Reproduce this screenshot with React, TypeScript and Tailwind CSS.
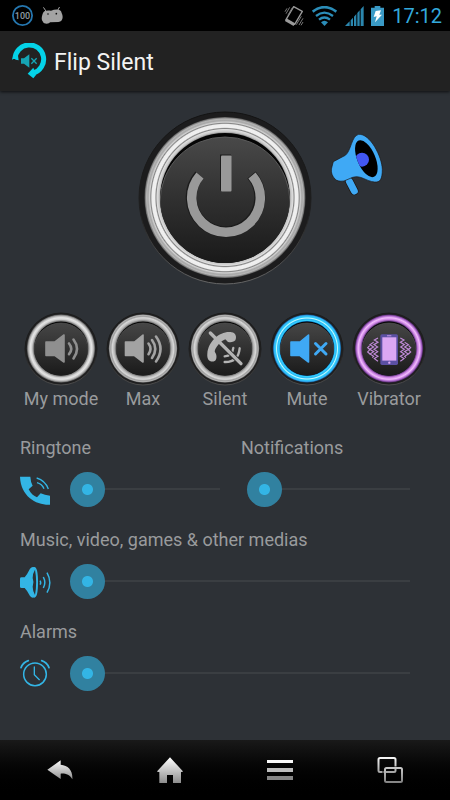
import React, { useState } from "react";

function StatusBar() {
  return (
    <div className="flex h-[31px] items-center bg-black pl-3 pr-2">
      <svg width="21" height="21" viewBox="0 0 21 21" role="img" aria-label="Battery 100">
        <circle cx="10.5" cy="10.5" r="9.6" fill="none" stroke="#2577b0" strokeWidth="1.800" />
        <text x="10.5" y="13.6" textAnchor="middle" fill="#8f9ba3" className="font-[Roboto,sans-serif] text-[9px] font-medium">100</text>
      </svg>
      <svg className="ml-2" width="23" height="17" viewBox="0 0 69 51" aria-hidden="true">
        <path d="M8 2l6 9M55 1l-5 9" stroke="#a3a3a3" strokeWidth="3" strokeLinecap="round" />
        <path d="M5 20C9 10 17 10 30 11C45 6 60 6 62 18C68 30 65 44 52 45L27 46C25 51 8 52 6 44C1 40 1 31 5 20Z" fill="#a3a3a3" />
        <circle cx="21" cy="21" r="2.5" fill="#111" />
        <circle cx="46" cy="20" r="2.5" fill="#111" />
      </svg>
      <div className="ml-auto flex items-center">
        <svg width="20" height="21" viewBox="0 0 60 63" fill="none" aria-hidden="true">
          <path d="M29 5L55 19L32 58L6 44Z" stroke="#9a9a9a" strokeWidth="4" strokeLinejoin="round" />
          <path d="M5 44L31 59" stroke="#9a9a9a" strokeWidth="9" />
          <path d="M3 20L9 10M6 26L17 7M12 30L25 8M37 59L52 34M45 60L57 40M51 61L57 51" stroke="#777" strokeWidth="3" />
        </svg>
        <svg className="ml-2" width="25" height="20" viewBox="0 0 75 60" fill="none" stroke="#2b8db8" aria-hidden="true">
          <path d="M2 17Q37 -10 73 17" strokeWidth="8" />
          <path d="M12 30Q37 10 63 30" strokeWidth="7" />
          <path d="M21 41Q37 28 54 41" strokeWidth="7" />
          <path d="M27 49Q37 39 48 49L37.500 60Z" fill="#2b8db8" stroke="none" />
        </svg>
        <svg className="ml-2" width="19" height="20" viewBox="0 0 57 60" fill="#2b86ad" aria-hidden="true">
          <path d="M0 60L14 46V60ZM17 43L24 35V60H17ZM27 32L34 24V60H27ZM37 21L44 13V60H37ZM47 10L56 0V60H47Z" />
        </svg>
        <svg className="ml-[7px]" width="13" height="20" viewBox="0 0 39 60" aria-hidden="true">
          <path d="M11 0H28V5H39V60H0V5H11Z" fill="#3a9ac6" />
          <path d="M14 15L30 13L25 26H33L12 49L17 31L8 33Z" fill="#fff" />
        </svg>
        <span className="ml-2 text-[20px] leading-6 text-[#33a9dc]">17:12</span>
      </div>
    </div>
  );
}

function Header() {
  return (
    <header className="flex h-[60px] items-center bg-[#222222] pl-3 shadow-[0_1px_3px_rgba(0,0,0,0.7)]">
      <svg width="35" height="36" viewBox="0 0 105 108" aria-hidden="true">
        <path d="M9 48A43 43 0 1 1 64 90" fill="none" stroke="#04d3e8" strokeWidth="15" />
        <path d="M0 51L7 46L11 50L20 52L18 38L4 38Z" fill="#04d3e8" />
        <path d="M47 92L64 74L72 96L64 106Z" fill="#04d3e8" />
        <path d="M27 46H36L52 34V74L36 62H27Z" fill="#16a5b4" />
        <path d="M58 46L74 62M74 46L58 62" stroke="#16a5b4" strokeWidth="4" />
      </svg>
      <h1 className="ml-[7px] pt-1 text-[23px] leading-7 text-[#f3f3f3]">Flip Silent</h1>
    </header>
  );
}

function PowerButton() {
  return (
    <button type="button" aria-label="Power" className="block">
      <svg width="174" height="174" viewBox="0 0 174 174" className="block">
        <defs>
          <radialGradient id="bigRing" gradientUnits="userSpaceOnUse" cx="87" cy="86.500" r="80.500">
            <stop offset="0.800" stopColor="#8d8d8d" />
            <stop offset="0.820" stopColor="#c9c9c9" />
            <stop offset="0.845" stopColor="#dedede" />
            <stop offset="0.857" stopColor="#858585" />
            <stop offset="0.872" stopColor="#f0f0f0" />
            <stop offset="0.908" stopColor="#eeeeee" />
            <stop offset="0.922" stopColor="#868686" />
            <stop offset="0.935" stopColor="#d2d2d2" />
            <stop offset="0.955" stopColor="#a8a8a8" />
            <stop offset="0.975" stopColor="#b4b4b4" />
            <stop offset="1" stopColor="#555555" />
          </radialGradient>
          <linearGradient id="bigFace" x1="0" y1="0" x2="0" y2="1">
            <stop offset="0" stopColor="#494949" />
            <stop offset="0.500" stopColor="#2f2f2f" />
            <stop offset="1" stopColor="#181818" />
          </linearGradient>
          <linearGradient id="bigEdge" x1="0" y1="0" x2="0" y2="1">
            <stop offset="0" stopColor="#121212" />
            <stop offset="0.600" stopColor="#202020" />
            <stop offset="1" stopColor="#666666" />
          </linearGradient>
          <clipPath id="bigHole"><circle cx="87" cy="87" r="65" /></clipPath>
        </defs>
        <circle cx="87" cy="87" r="86" fill="#1c1c1d" stroke="url(#bigEdge)" strokeWidth="1" />
        <circle cx="87" cy="86.500" r="80.500" fill="url(#bigRing)" />
        <circle cx="87" cy="87" r="65" fill="#050505" />
        <g clipPath="url(#bigHole)">
          <circle cx="87" cy="91" r="65" fill="url(#bigFace)" stroke="#5a5a5a" strokeWidth="1" />
        </g>
        <path d="M61.500 64A34.300 34.300 0 1 0 113.500 64" fill="none" stroke="#1c1c1c" strokeWidth="11" />
        <path d="M62 64.500A34.300 34.300 0 1 0 114 64.500" fill="none" stroke="#999999" strokeWidth="9.500" />
        <rect x="82" y="43.500" width="11" height="36" fill="#1c1c1c" />
        <rect x="83" y="44.500" width="10.500" height="36" rx="1" fill="#999999" />
      </svg>
    </button>
  );
}

function Megaphone() {
  return (
    <svg width="52" height="62" viewBox="33 42 156 186" className="block">
      <path d="M88 184L103 213" stroke="#1c1410" strokeWidth="25" strokeLinecap="round" />
      <path d="M88 184L103 213" stroke="#3fa9f5" strokeWidth="21" strokeLinecap="round" />
      <path d="M40 125L76 106C94 92 94 48 116 43C150 40 186 110 187 148C187 178 180 188 164 186C138 184 122 164 98 172L72 183C58 185 50 182 46 178C34 166 32 152 36 140C38 134 38 130 40 125Z" fill="#3fa9f5" stroke="#1c1410" strokeWidth="2" />
      <clipPath id="hornMouth"><ellipse cx="139" cy="116" rx="27" ry="59" transform="rotate(-23 139 116)" /></clipPath>
      <ellipse cx="139" cy="116" rx="27" ry="59" transform="rotate(-23 139 116)" fill="#000" />
      <circle cx="126" cy="119" r="21" fill="#4257f2" clipPath="url(#hornMouth)" />
    </svg>
  );
}

type Tone = "soft" | "steel" | "blue" | "violet";

const tones: Record<Tone, [number, string][]> = {
  soft: [[0.8, "#777777"], [0.85, "#cfcfcf"], [0.9, "#e6e6e6"], [0.95, "#b4b4b4"], [1, "#4a4a4a"]],
  steel: [[0.8, "#777777"], [0.84, "#b5b5b5"], [0.9, "#d8d8d8"], [0.94, "#a0a0a0"], [0.97, "#b0b0b0"], [1, "#666666"]],
  blue: [[0.79, "#0a78c8"], [0.82, "#35d0fd"], [0.86, "#28b8f5"], [0.89, "#c8faff"], [0.92, "#2cd0fc"], [0.96, "#35b0f5"], [1, "#0b3f70"]],
  violet: [[0.79, "#4b2a66"], [0.84, "#c77de0"], [0.9, "#f2bcfd"], [0.95, "#b06ad0"], [1, "#3a1c50"]],
};

function Dial({ id, tone, children }: { id: string; tone: Tone; children: React.ReactNode }) {
  return (
    <svg width="74" height="74" viewBox="0 0 74 74" className="block" fill="none">
      <defs>
        <radialGradient id={id + "Ring"} gradientUnits="userSpaceOnUse" cx="37" cy="36.500" r="34.200">
          {tones[tone].map(([at, color]) => <stop key={at} offset={at} stopColor={color} />)}
        </radialGradient>
        <linearGradient id={id + "Face"} x1="0" y1="0" x2="0" y2="1">
          <stop offset="0" stopColor="#464646" />
          <stop offset="1" stopColor="#191919" />
        </linearGradient>
        <linearGradient id={id + "Edge"} x1="0" y1="0" x2="0" y2="1">
          <stop offset="0.500" stopColor="#1c1c1c" />
          <stop offset="1" stopColor="#4c4c4c" />
        </linearGradient>
        <clipPath id={id + "Hole"}><circle cx="37" cy="36.500" r="27" /></clipPath>
      </defs>
      <circle cx="37" cy="37" r="36" fill="#1f1f20" stroke={"url(#" + id + "Edge)"} />
      <circle cx="37" cy="36.500" r="34.200" fill={"url(#" + id + "Ring)"} />
      <circle cx="37" cy="36.500" r="27" fill="#050505" />
      <g clipPath={"url(#" + id + "Hole)"}>
        <circle cx="37" cy="38" r="27" fill={"url(#" + id + "Face)"} stroke="#555" strokeWidth="0.700" />
      </g>
      {children}
    </svg>
  );
}

const modes: { id: string; label: string; tone: Tone; icon: React.ReactNode }[] = [
  {
    id: "custom", label: "My mode", tone: "soft",
    icon: (
      <g stroke="#8f8f8f" strokeWidth="2.600" strokeLinecap="round">
        <path d="M22 30H31L40 23V50L31 43.500H22Z" fill="#8f8f8f" strokeWidth="1.600" strokeLinejoin="round" />
        <path d="M45 31.500Q49.500 36.800 45 42.200M49.500 27.500Q56.500 36.800 49.500 46.500" />
      </g>
    ),
  },
  {
    id: "max", label: "Max", tone: "steel",
    icon: (
      <g stroke="#a3a3a3" strokeWidth="2.600" strokeLinecap="round">
        <path d="M19.500 30H28.500L37 23V50L28.500 43.500H19.500Z" fill="#a3a3a3" strokeWidth="1.600" strokeLinejoin="round" />
        <path d="M42.500 31.500Q46.500 36.800 42.500 42.200M46 28Q52.500 36.800 46 46M50 24.500Q59 36.800 50 49.500" />
      </g>
    ),
  },
  {
    id: "silent", label: "Silent", tone: "steel",
    icon: (
      <g transform="translate(-8 -11.700) scale(0.3333)" strokeLinecap="round">
        <path d="M166 120C171 110 167 97 155 96C124 90 85 120 82 160C80 180 92 187 104 182C111 178 111 163 106 157C98 150 126 116 138 118C142 126 154 130 166 120Z" fill="#b4b4b4" />
        <path d="M134 168Q157 168 160 143M134 185Q175 186 179 144" stroke="#b4b4b4" strokeWidth="7" />
        <path d="M138 145L178 185" stroke="#2c2c2c" strokeWidth="15" strokeLinecap="butt" />
        <path d="M91 98L183 190" stroke="#b4b4b4" strokeWidth="10" />
      </g>
    ),
  },
  {
    id: "mute", label: "Mute", tone: "blue",
    icon: (
      <g stroke="#3fa9f5" strokeWidth="3" strokeLinecap="round">
        <path d="M21 30H30L38.500 23V50L30 43.500H21Z" fill="#3fa9f5" strokeWidth="1.600" strokeLinejoin="round" />
        <path d="M45.500 31.500L56 42M56 31.500L45.500 42" />
      </g>
    ),
  },
  {
    id: "vibrator", label: "Vibrator", tone: "violet",
    icon: (
      <g transform="translate(-12 -11.700) scale(0.3333)">
        <rect x="121" y="102" width="53" height="92" rx="5" fill="#5b50a3" />
        <rect x="127" y="111" width="42" height="70" fill="#dba7f3" />
        <path d="M141 106.500H154" stroke="#dba7f3" strokeWidth="2.500" />
        <circle cx="148" cy="187" r="3.500" fill="#dba7f3" />
        <g id="shake" stroke="#c08bd8" strokeWidth="3.500">
          <path d="M114 113L103 119L114 126L102 133L113 140L102 147L113 154L102 161L114 168L103 175L114 183" />
          <path d="M101 126L90 133L101 140L89 147L101 154L90 161L101 168L97 172" />
          <path d="M89 136L83 142L90 148L83 155L90 161" />
        </g>
        <use href="#shake" transform="translate(295 0) scale(-1 1)" />
      </g>
    ),
  },
];

function RingPhone() {
  return (
    <svg width="30" height="34" viewBox="0 -12 90 102" fill="none" stroke="#33b5e5" aria-hidden="true">
      <path d="M0 2H31Q32 18 38 29L26 40C33 53 41 60 51 64L62 52Q74 58 90 59V86C50 88 2 62 0 2Z" fill="#33b5e5" stroke="none" />
      <path d="M50 6Q76 14 85 39M51 20Q66 24 72 38" strokeWidth="4" />
    </svg>
  );
}

function MediaSpeaker() {
  return (
    <svg width="31" height="34" viewBox="0 -8 93 102" fill="none" stroke="#33b5e5" aria-hidden="true">
      <path d="M0 36Q0 32 5 32H14Q22 22 30 6Q36 -1 42 2V92Q36 95 30 88Q22 72 14 64H5Q0 64 0 60Z" fill="#33b5e5" stroke="none" />
      <ellipse cx="43" cy="47" rx="9" ry="44" fill="#33b5e5" strokeWidth="4" />
      <path d="M45 9Q52 47 45 85Q38 72 38 60Q43 47 38 34Q38 20 45 9Z" fill="#2c3035" stroke="none" />
      <path d="M60 42Q64 48 60 54M70 31Q79 48 70 64M81 18Q98 48 81 78" strokeWidth="4.500" />
    </svg>
  );
}

function AlarmClock() {
  return (
    <svg width="30" height="28" viewBox="0 0 90 84" fill="none" stroke="#33b5e5" strokeLinecap="round" aria-hidden="true">
      <circle cx="45" cy="46" r="34" strokeWidth="4.500" />
      <path d="M43 24V47L58 62" strokeWidth="4" />
      <path d="M3 26Q9 10 25 5M65 5Q81 10 87 26" strokeWidth="5" />
    </svg>
  );
}

function VolumeSlider({ id }: { id: string }) {
  const [value, setValue] = useState(0);
  return (
    <input
      id={id}
      type="range"
      min={0}
      max={15}
      value={value}
      onChange={(e) => setValue(Number(e.target.value))}
      className="h-9 w-full min-w-0 flex-1 cursor-pointer appearance-none bg-[linear-gradient(to_right,transparent_17px,#3a3e42_17px)] bg-[length:100%_2px] bg-center bg-no-repeat outline-none [&::-webkit-slider-thumb]:size-[35px] [&::-webkit-slider-thumb]:appearance-none [&::-webkit-slider-thumb]:rounded-full [&::-webkit-slider-thumb]:bg-[radial-gradient(circle,#33b5e5_5px,#3181a0_6px)]"
    />
  );
}

function Volume({ id, label, icon }: { id: string; label: string; icon?: React.ReactNode }) {
  return (
    <div>
      <label htmlFor={id} className="block text-[18px] leading-6 text-[#999b9d]">{label}</label>
      <div className={icon ? "mt-[11px] flex items-center" : "mt-[11px] flex items-center pl-1.5"}>
        {icon && <div className="flex w-[50px] shrink-0 items-center">{icon}</div>}
        <VolumeSlider id={id} />
      </div>
    </div>
  );
}

function NavBar() {
  return (
    <nav className="grid h-[60px] grid-cols-4 bg-linear-to-b from-[#191919] to-black px-[5px]">
      <button type="button" aria-label="Back" className="flex items-center justify-center">
        <svg width="26" height="20" viewBox="0 0 78 60">
          <defs>
            <linearGradient id="navFade" gradientUnits="userSpaceOnUse" x1="0" y1="0" x2="0" y2="60">
              <stop offset="0" stopColor="#ffffff" />
              <stop offset="1" stopColor="#8c8c8c" />
            </linearGradient>
          </defs>
          <path d="M1 29L41 1V14C64 16 78 32 76 58C68 44 56 40 41 41V57Z" fill="url(#navFade)" />
        </svg>
      </button>
      <button type="button" aria-label="Home" className="flex items-center justify-center">
        <svg width="26" height="26" viewBox="0 0 78 78">
          <defs>
            <linearGradient id="homeFade" x1="0" y1="0" x2="0" y2="1">
              <stop offset="0" stopColor="#ffffff" />
              <stop offset="1" stopColor="#8c8c8c" />
            </linearGradient>
          </defs>
          <path d="M39 1L77 42V45H72V78H48V54H30V78H7V45H1V42Z" fill="url(#homeFade)" />
        </svg>
      </button>
      <button type="button" aria-label="Menu" className="flex items-center justify-center">
        <svg width="26" height="22" viewBox="0 0 26 22">
          <rect y="1" width="26" height="3" fill="#fafafa" />
          <rect y="9" width="26" height="4" fill="#bebebe" />
          <rect y="17" width="26" height="4" fill="#868686" />
        </svg>
      </button>
      <button type="button" aria-label="Recent apps" className="flex items-center justify-center">
        <svg width="26" height="26" viewBox="0 0 26 26" fill="none" strokeWidth="2">
          <defs>
            <linearGradient id="backPane" x1="0" y1="0" x2="0" y2="1">
              <stop offset="0" stopColor="#f5f5f5" />
              <stop offset="1" stopColor="#a5a5a5" />
            </linearGradient>
            <linearGradient id="frontPane" x1="0" y1="0" x2="0" y2="1">
              <stop offset="0" stopColor="#c8c8c8" />
              <stop offset="1" stopColor="#858585" />
            </linearGradient>
          </defs>
          <rect x="1.500" y="1" width="17" height="14" rx="1.500" stroke="url(#backPane)" />
          <path d="M6 17V10H20" stroke="#0b0b0b" strokeWidth="1" />
          <rect x="8" y="11" width="17" height="14" rx="1.500" stroke="url(#frontPane)" />
        </svg>
      </button>
    </nav>
  );
}

export default function App() {
  return (
    <div className="flex min-h-screen flex-col bg-[#2d3136] font-[Roboto,sans-serif]">
      <StatusBar />
      <Header />
      <main className="flex-1">
        <div className="grid grid-cols-[1fr_auto_1fr] pt-5">
          <div className="col-start-2"><PowerButton /></div>
          <button type="button" aria-label="Announce" className="mt-[23px] ml-[19px] self-start justify-self-start">
            <Megaphone />
          </button>
        </div>
        <div className="mt-[27px] grid grid-cols-5 px-5">
          {modes.map((mode) => (
            <button key={mode.id} type="button" className="flex flex-col items-center text-[#999b9d]">
              <Dial id={mode.id} tone={mode.tone}>{mode.icon}</Dial>
              <span className="mt-px text-[18px] leading-6 whitespace-nowrap">{mode.label}</span>
            </button>
          ))}
        </div>
        <div className="mt-[25px] flex flex-col gap-[21px] pr-10 pl-5">
          <div className="grid grid-cols-[200fr_169fr] gap-x-[21px]">
            <Volume id="ringtone" label="Ringtone" icon={<RingPhone />} />
            <Volume id="notifications" label="Notifications" />
          </div>
          <Volume id="media" label="Music, video, games & other medias" icon={<MediaSpeaker />} />
          <Volume id="alarms" label="Alarms" icon={<AlarmClock />} />
        </div>
      </main>
      <NavBar />
    </div>
  );
}
